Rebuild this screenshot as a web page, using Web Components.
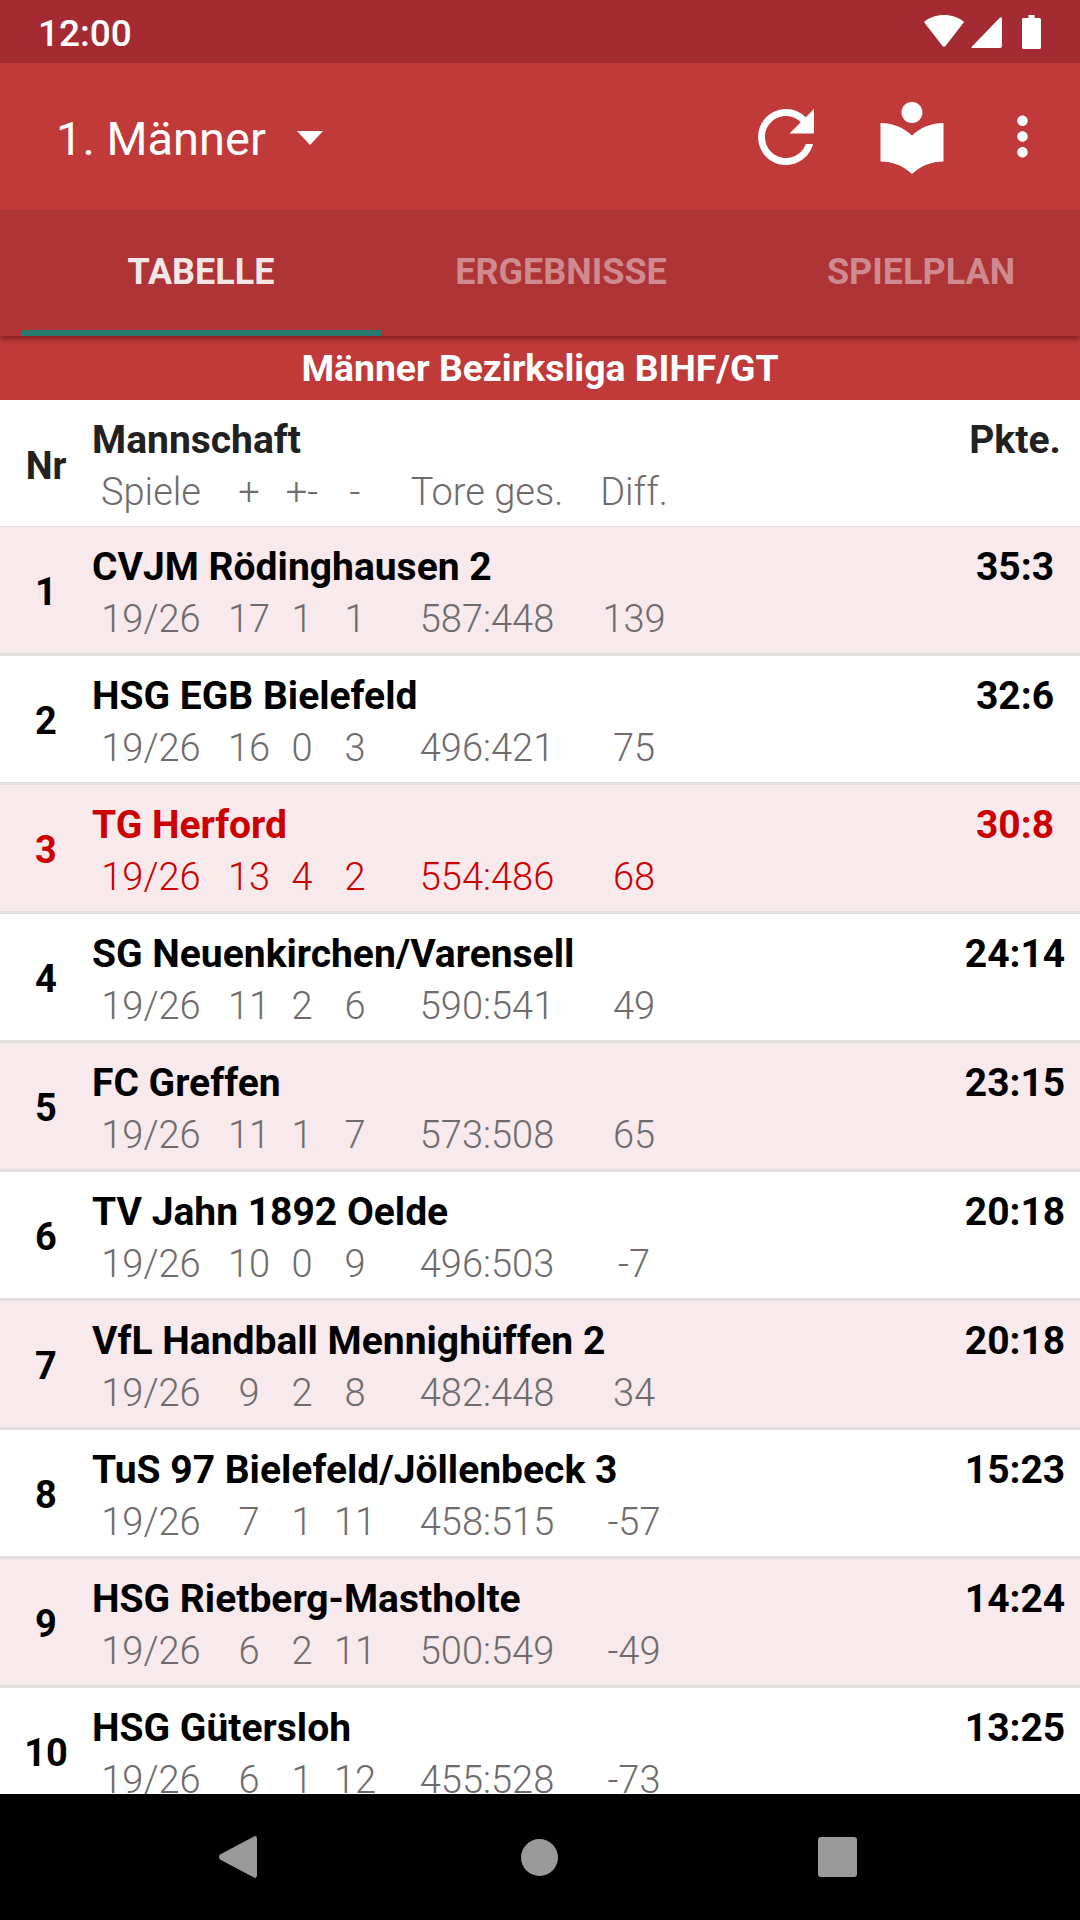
<!DOCTYPE html>
<html lang="de">
<head>
<meta charset="utf-8">
<title>Tabelle</title>
<style>
  html, body { margin: 0; padding: 0; }
  body { width: 1080px; height: 1920px; overflow: hidden; font-family: Roboto, "Liberation Sans", sans-serif; }
  league-app { width: 1080px; height: 1920px; }
</style>
</head>
<body>
<league-app>
  <status-bar slot="top" time="12:00"></status-bar>
  <app-toolbar slot="top" title="1. Männer"></app-toolbar>
  <tab-strip slot="top" items="TABELLE,ERGEBNISSE,SPIELPLAN"></tab-strip>
  <league-title slot="top">Männer Bezirksliga BIHF/GT</league-title>

  <table-head></table-head>
  <table-row nr="1" pts="35:3" tint values="19/26,17,1,1,587:448,139">CVJM Rödinghausen 2</table-row>
  <table-row nr="2" pts="32:6" values="19/26,16,0,3,496:421,75">HSG EGB Bielefeld</table-row>
  <table-row nr="3" pts="30:8" tint own values="19/26,13,4,2,554:486,68">TG Herford</table-row>
  <table-row nr="4" pts="24:14" values="19/26,11,2,6,590:541,49">SG Neuenkirchen/Varensell</table-row>
  <table-row nr="5" pts="23:15" tint values="19/26,11,1,7,573:508,65">FC Greffen</table-row>
  <table-row nr="6" pts="20:18" values="19/26,10,0,9,496:503,-7">TV Jahn 1892 Oelde</table-row>
  <table-row nr="7" pts="20:18" tint values="19/26,9,2,8,482:448,34">VfL Handball Mennighüffen 2</table-row>
  <table-row nr="8" pts="15:23" values="19/26,7,1,11,458:515,-57">TuS 97 Bielefeld/Jöllenbeck 3</table-row>
  <table-row nr="9" pts="14:24" tint values="19/26,6,2,11,500:549,-49">HSG Rietberg-Mastholte</table-row>
  <table-row nr="10" pts="13:25" values="19/26,6,1,12,455:528,-73">HSG Gütersloh</table-row>

  <nav-bar slot="bottom"></nav-bar>
</league-app>

<script>
const SUB_COLUMNS = '118px 78px 28px 78px 186px 108px';

class LeagueApp extends HTMLElement {
  constructor() {
    super();
    this.attachShadow({ mode: 'open' }).innerHTML = `
      <style>
        :host { display: flex; flex-direction: column; background: #fff; }
        main { flex: 1; min-height: 0; overflow: hidden; }
      </style>
      <slot name="top"></slot>
      <main><slot></slot></main>
      <slot name="bottom"></slot>
    `;
  }
}

class StatusBar extends HTMLElement {
  connectedCallback() {
    this.attachShadow({ mode: 'open' }).innerHTML = `
      <style>
        :host { display: flex; align-items: center; height: 63px; box-sizing: border-box; padding: 0 39px 0 38px; background: #a42b31; color: #fff; }
        span { flex: 1; font-size: 37px; font-weight: 500; line-height: 63px; padding-top: 4px; }
        svg { display: block; fill: #fff; }
        .wifi { margin-top: -1px; }
        .signal { margin: 2px 20px 0 7px; }
      </style>
      <span>${this.getAttribute('time')}</span>
      <svg class="wifi" width="40" height="32" viewBox="0 0 40 32"><path d="M20 0C12 0 5.500 2.500 0.500 6.500Q0 7 0.500 7.800L18.500 31Q20 32.500 21.500 31L39.500 7.800Q40 7 39.500 6.500C34.500 2.500 28 0 20 0z"/></svg>
      <svg class="signal" width="31" height="31" viewBox="0 0 31 31"><path d="M29 0.500Q31 -0.500 31 2V29Q31 31 29 31H1.500Q-0.500 31 1 29.500z"/></svg>
      <svg width="19" height="34" viewBox="0 0 19 34"><path d="M6.500 0H12.500V3H17.500Q19 3 19 4.500V32.500Q19 34 17.500 34H1.500Q0 34 0 32.500V4.500Q0 3 1.500 3H6.500z"/></svg>
    `;
  }
}

class AppToolbar extends HTMLElement {
  connectedCallback() {
    this.attachShadow({ mode: 'open' }).innerHTML = `
      <style>
        :host { display: flex; align-items: center; height: 147px; background: #c13a3a; color: #fff; }
        h1 { margin: 4px 0 0 56px; font-size: 47px; font-weight: 400; white-space: nowrap; }
        .arrow { width: 0; height: 0; margin: 3px 0 0 31px; border: solid transparent; border-width: 14px 13px 0; border-top-color: #fff; }
        .spacer { flex: 1; }
        svg { display: block; fill: #fff; }
        .book { margin-left: 42px; }
        .more { margin: 0 26px 0 37px; }
      </style>
      <h1>${this.getAttribute('title')}</h1>
      <div class="arrow"></div>
      <div class="spacer"></div>
      <svg width="84" height="84" viewBox="0 0 24 24"><path d="M17.650 6.350C16.200 4.900 14.210 4 12 4c-4.420 0-7.990 3.580-7.990 8s3.570 8 7.990 8c3.730 0 6.840-2.550 7.730-6h-2.080c-.820 2.330-3.040 4-5.650 4-3.310 0-6-2.690-6-6s2.690-6 6-6c1.660 0 3.140.690 4.220 1.780L13 11h7V4l-2.350 2.350z"/></svg>
      <svg class="book" width="84" height="84" viewBox="0 0 24 24"><path d="M12 11.550C9.640 9.350 6.480 8 3 8v11c3.480 0 6.640 1.350 9 3.550 2.360-2.190 5.520-3.550 9-3.550V8c-3.480 0-6.640 1.350-9 3.550zM12 8c1.660 0 3-1.340 3-3s-1.340-3-3-3-3 1.340-3 3 1.340 3 3 3z"/></svg>
      <svg class="more" width="63" height="63" viewBox="0 0 24 24"><path d="M12 8c1.100 0 2-.900 2-2s-.900-2-2-2-2 .900-2 2 .900 2 2 2zm0 2c-1.100 0-2 .900-2 2s.900 2 2 2 2-.900 2-2-.900-2-2-2zm0 6c-1.100 0-2 .900-2 2s.900 2 2 2 2-.900 2-2-.900-2-2-2z"/></svg>
    `;
  }
}

class TabStrip extends HTMLElement {
  connectedCallback() {
    const tabs = this.getAttribute('items').split(',').map((label, i) =>
      `<div class="tab${i === 0 ? ' on' : ''}">${label}</div>`).join('');
    this.attachShadow({ mode: 'open' }).innerHTML = `
      <style>
        /* clip-path keeps the shadow off the toolbar above */
        :host { display: flex; position: relative; z-index: 1; height: 126px; box-sizing: border-box; padding-left: 21px; background: #ae3435; box-shadow: 0 3px 6px rgba(70, 10, 10, .55); clip-path: inset(0 0 -14px 0); }
        .row { display: flex; width: 1059px; overflow: hidden; }
        .tab { flex: 0 0 360px; box-sizing: border-box; height: 126px; padding-bottom: 2px; display: flex; align-items: center; justify-content: center; font-size: 36px; font-weight: 700; color: #cf8a8f; }
        .tab.on { color: #f3e6e6; border-bottom: 6px solid #25796f; padding: 4px 0 0; }
      </style>
      <div class="row">${tabs}</div>
    `;
  }
}

class LeagueTitle extends HTMLElement {
  constructor() {
    super();
    this.attachShadow({ mode: 'open' }).innerHTML = `
      <style>
        :host { display: block; height: 64px; line-height: 64px; background: #c13a3a; color: #fff; text-align: center; font-size: 37.300px; font-weight: 700; }
      </style>
      <slot></slot>
    `;
  }
}

// shared shell for the head row and the data rows
const rowStyles = `
  :host { display: grid; grid-template-columns: 92px 1fr 100px; grid-template-rows: 63px 1fr; box-sizing: border-box; border-bottom: 3px solid #e2dfdf; height: 129px; background: #fff; color: #000; }
  :host([tint]) { background: #f7e9ec; }
  :host([own]) { color: #cc0000; }
  .nr { grid-row: 1 / 3; align-self: center; margin-top: 3px; text-align: center; font-size: 38px; font-weight: 700; line-height: 42px; }
  .name { padding-top: 18px; height: 45px; line-height: 45px; font-size: 39px; font-weight: 700; white-space: nowrap; }
  .pts { padding-top: 18px; height: 45px; line-height: 45px; margin-right: 30px; font-size: 39px; font-weight: 700; display: flex; justify-content: center; white-space: nowrap; }
  .sub { grid-column: 2 / 4; display: grid; grid-template-columns: ${SUB_COLUMNS}; align-items: center; height: 50px; padding-top: 4px; font-size: 38px; font-weight: 300; color: #6f6b6c; line-height: 50px; }
  :host([own]) .sub { color: #cc0000; }
  .sub span { white-space: nowrap; justify-self: center; }
`;

class TableHead extends HTMLElement {
  connectedCallback() {
    const cols = ['Spiele', '+', '+-', '-', 'Tore ges.', 'Diff.'];
    this.attachShadow({ mode: 'open' }).innerHTML = `
      <style>${rowStyles}
        :host { color: #212121; height: 127px; border-bottom-width: 1px; }
        .nr { margin-top: 5px; }
      </style>
      <div class="nr">Nr</div>
      <div class="name">Mannschaft</div>
      <div class="pts">Pkte.</div>
      <div class="sub">${cols.map(c => `<span>${c}</span>`).join('')}</div>
    `;
  }
}

class TableRow extends HTMLElement {
  connectedCallback() {
    const vals = this.getAttribute('values').split(',');
    this.attachShadow({ mode: 'open' }).innerHTML = `
      <style>${rowStyles}</style>
      <div class="nr">${this.getAttribute('nr')}</div>
      <div class="name"><slot></slot></div>
      <div class="pts">${this.getAttribute('pts')}</div>
      <div class="sub">${vals.map(v => `<span>${v}</span>`).join('')}</div>
    `;
  }
}

class NavBar extends HTMLElement {
  constructor() {
    super();
    this.attachShadow({ mode: 'open' }).innerHTML = `
      <style>
        :host { display: flex; align-items: center; height: 126px; padding-left: 219px; background: #000; }
        svg { display: block; fill: #9a9a9a; }
        .home { margin-left: 264px; }
        .recent { margin-left: 260px; }
      </style>
      <svg width="38" height="42" viewBox="0 0 38 42"><path d="M35 0.500Q38 -1 38 3V39Q38 43 35 41.500L1 23.500Q-1 21 1 18.500z"/></svg>
      <svg class="home" width="37" height="37" viewBox="0 0 37 37"><circle cx="18.500" cy="18.500" r="18.500"/></svg>
      <svg class="recent" width="39" height="40" viewBox="0 0 39 40"><rect width="39" height="40" rx="3"/></svg>
    `;
  }
}

customElements.define('league-app', LeagueApp);
customElements.define('status-bar', StatusBar);
customElements.define('app-toolbar', AppToolbar);
customElements.define('tab-strip', TabStrip);
customElements.define('league-title', LeagueTitle);
customElements.define('table-head', TableHead);
customElements.define('table-row', TableRow);
customElements.define('nav-bar', NavBar);
</script>
</body>
</html>
